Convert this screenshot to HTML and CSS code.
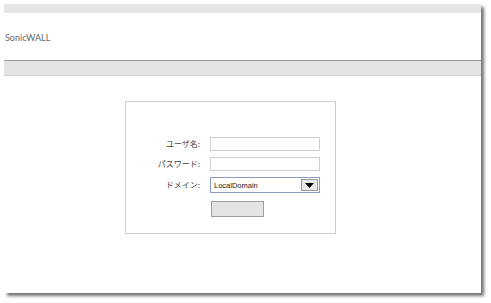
FILE: index.html
```html
<!DOCTYPE html>
<html lang="ja">
<head>
<meta charset="utf-8">
<link rel="stylesheet" href="styles.css">
</head>
<body>
<div class="window">
  <div class="titlebar"></div>
  <div class="header"><span class="brand">SonicWALL</span></div>
  <div class="navbar"></div>
  <div class="content">
    <div class="login">
      <div class="form">
        <label class="lbl">ユーザ名:</label>
        <div class="input"></div>
        <label class="lbl">パスワード:</label>
        <div class="input"></div>
        <label class="lbl">ドメイン:</label>
        <div class="select"><span class="sel-text">LocalDomain</span><span class="sel-btn"><svg width="9" height="5" viewBox="0 0 9 5"><path d="M0 0H9L4.5 5Z" fill="#000"/></svg></span></div>
        <span></span>
        <div class="btn"></div>
      </div>
    </div>
  </div>
</div>
</body>
</html>
```
FILE: styles.css
```css
html, body { margin: 0; padding: 0; background: #fff; }
body { width: 491px; height: 303px; padding: 4px 0 0 4px; box-sizing: border-box; overflow: hidden; }
.window {
  width: 477px; height: 289px; background: #fff;
  box-shadow: 3px 3px 3px rgba(0,0,0,0.55);
  display: flex; flex-direction: column;
}
.titlebar { height: 9px; background: #e6e6e6; }
.header { height: 47px; display: flex; align-items: center; padding-left: 1px; }
.brand { font-family: Lato, "Open Sans", sans-serif; font-size: 9px; color: #666; padding-top: 1px; }
.navbar { height: 14px; background: #e4e4e4; border-top: 1px solid #9a9a9a; border-bottom: 1px solid #cfcfcf; }
.content { flex: 1; padding-top: 25px; padding-left: 121px; }
.login {
  border: 1px solid #cccccc;
  padding-top: 35px; box-sizing: border-box; height: 133px; width: 211px;
}
.form {
  display: grid; grid-template-columns: 74px 110px; column-gap: 10px;
  row-gap: 6px; align-items: center;
}
.lbl {
  text-align: right; font-family: "Noto Sans CJK JP", sans-serif; font-size: 8px; color: #444;
  line-height: 14px;
}
.input { height: 14px; border: 1px solid #cfcfcf; box-sizing: border-box; background: #fff; }
.select {
  height: 16px; border: 1px solid #8a9cc0; box-sizing: border-box; display: flex; align-items: center;
  justify-content: space-between; background: #fff;
}
.sel-text { font-family: "Liberation Sans", Arial, sans-serif; font-size: 7.5px; color: #222; padding-left: 3px; }
.sel-btn {
  width: 17px; height: 12px; margin-right: 1px; background: #e8e8e8; border: 1px solid #999;
  box-sizing: border-box; display: flex; align-items: center; justify-content: center;
}
.btn { margin-top: 2px; margin-left: 1px; width: 53px; height: 16px; background: #e4e4e4; border: 1px solid #a0a0a0; box-sizing: border-box; }
```
